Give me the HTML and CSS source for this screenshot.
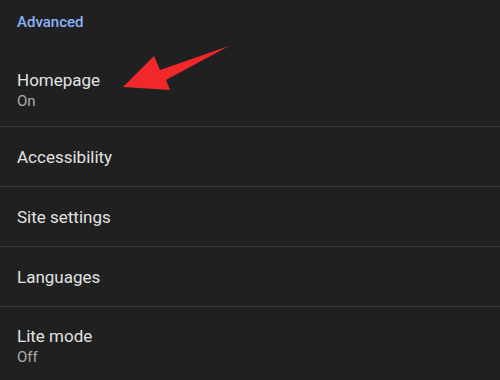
FILE: index.html
```html
<!DOCTYPE html>
<html lang="en">
<head>
    <meta charset="UTF-8">
    <meta name="viewport" content="width=device-width, initial-scale=1.0">
    <title>Settings</title>
    <link rel="stylesheet" href="styles.css">
</head>
<body>
    <div class="settings">
        <div class="section-title">Advanced</div>
        <div class="item two-line">
            <div class="item-title">Homepage</div>
            <div class="item-sub">On</div>
        </div>
        <div class="item">
            <div class="item-title">Accessibility</div>
        </div>
        <div class="item">
            <div class="item-title">Site settings</div>
        </div>
        <div class="item">
            <div class="item-title">Languages</div>
        </div>
        <div class="item two-line last">
            <div class="item-title">Lite mode</div>
            <div class="item-sub">Off</div>
        </div>

        <!-- flecha roja -->
        <svg class="arrow" width="500" height="380" viewBox="0 0 500 380">
            <polygon points="123,87 154,56 160,70 229,46 166,80 170,90" fill="#f0282c"/>
        </svg>
    </div>
</body>
</html>
```

FILE: styles.css
```css
body {
    margin: 0;
    background-color: #202020;
    font-family: Roboto, "Noto Sans", Arial, sans-serif;
}
.settings {
    position: relative;
    width: 500px;
    height: 380px;
    overflow: hidden;
}
.section-title {
    height: 43px;
    padding: 0 17px;
    display: flex;
    align-items: center;
    color: #8ab4f8;
    font-size: 15px;
    font-weight: 500;
}
.item {
    padding: 19px 17px 18px;
    border-bottom: 1px solid #3a3a3a;
}
.item.two-line {
    padding: 26px 17px 15px;
}
.item.last {
    padding-top: 18px;
    border-bottom: none;
}
.item-title {
    color: #e2e2e2;
    font-size: 17px;
    line-height: 22px;
}
.item-sub {
    color: #acacac;
    font-size: 15px;
    line-height: 20px;
}
.arrow {
    position: absolute;
    left: 0;
    top: 0;
}
```
